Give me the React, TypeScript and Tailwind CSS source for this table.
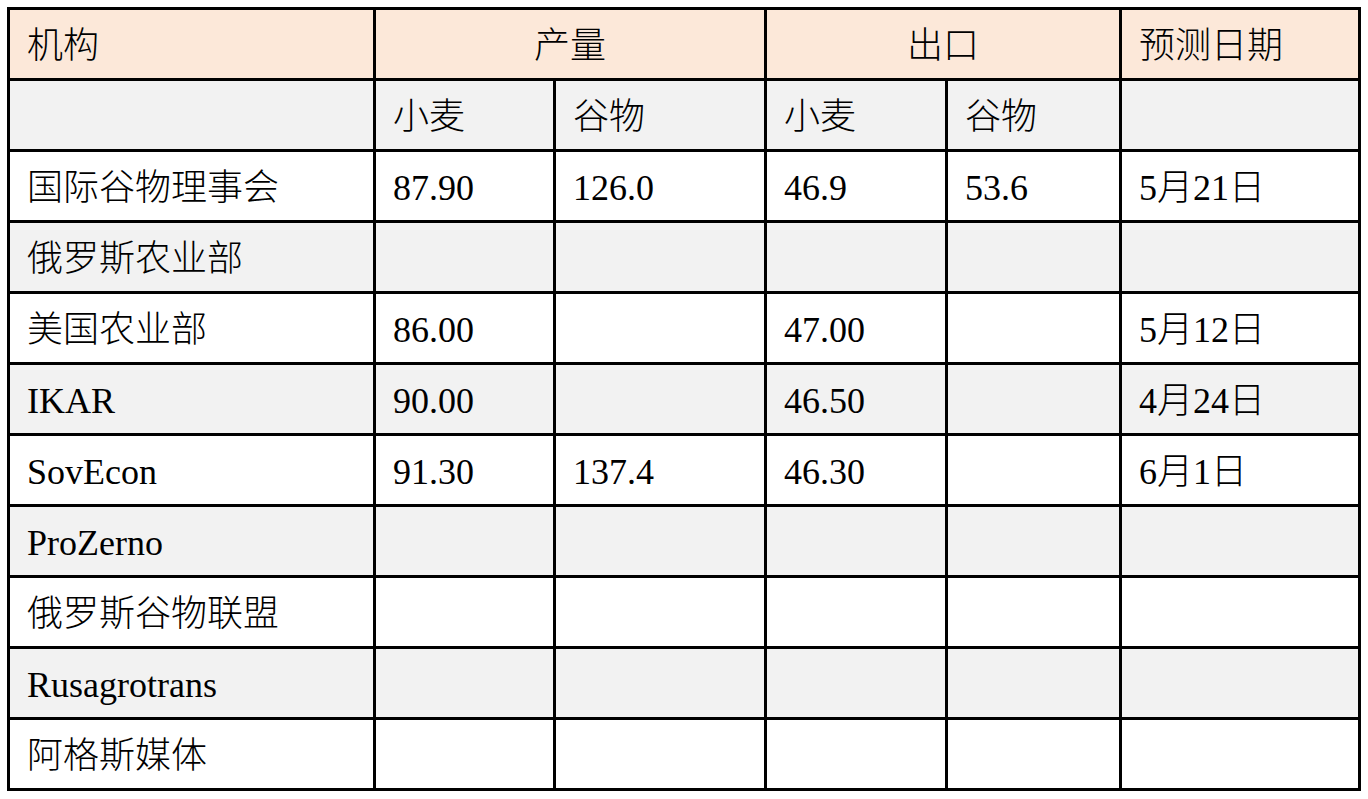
const rows: { name: string; cells: string[] }[] = [
  { name: '国际谷物理事会', cells: ['87.90', '126.0', '46.9', '53.6', '5月21日'] },
  { name: '俄罗斯农业部', cells: ['', '', '', '', ''] },
  { name: '美国农业部', cells: ['86.00', '', '47.00', '', '5月12日'] },
  { name: 'IKAR', cells: ['90.00', '', '46.50', '', '4月24日'] },
  { name: 'SovEcon', cells: ['91.30', '137.4', '46.30', '', '6月1日'] },
  { name: 'ProZerno', cells: ['', '', '', '', ''] },
  { name: '俄罗斯谷物联盟', cells: ['', '', '', '', ''] },
  { name: 'Rusagrotrans', cells: ['', '', '', '', ''] },
  { name: '阿格斯媒体', cells: ['', '', '', '', ''] },
];

const cell = 'border-[3px] border-black px-[17px] pt-[3px] align-middle font-light';

export default function App() {
  return (
    <div
      className="min-h-screen bg-white pl-[7px] pt-[7px] text-[36px] leading-none text-black"
      style={{ fontFamily: '"Liberation Serif", "Noto Sans CJK SC", serif' }}
    >
      <table className="w-[1353px] table-fixed border-collapse">
        <colgroup>
          <col className="w-[366px]" />
          <col className="w-[180px]" />
          <col className="w-[211px]" />
          <col className="w-[181px]" />
          <col className="w-[174px]" />
          <col className="w-[239px]" />
        </colgroup>
        <thead>
          <tr className="h-[71px] bg-[#fce8d9]">
            <th className={`${cell} text-left`}>机构</th>
            <th colSpan={2} className={`${cell} text-center`}>产量</th>
            <th colSpan={2} className={`${cell} text-center`}>出口</th>
            <th className={`${cell} text-left`}>预测日期</th>
          </tr>
          <tr className="h-[71px] bg-[#f2f2f2]">
            <th className={`${cell} text-left`}></th>
            <th className={`${cell} text-left`}>小麦</th>
            <th className={`${cell} text-left`}>谷物</th>
            <th className={`${cell} text-left`}>小麦</th>
            <th className={`${cell} text-left`}>谷物</th>
            <th className={`${cell} text-left`}></th>
          </tr>
        </thead>
        <tbody>
          {rows.map((r, i) => (
            <tr key={r.name} className={`h-[71px] ${i % 2 === 1 ? 'bg-[#f2f2f2]' : 'bg-white'}`}>
              <td className={cell}>{r.name}</td>
              {r.cells.map((c, j) => (
                <td key={j} className={cell}>
                  {c}
                </td>
              ))}
            </tr>
          ))}
        </tbody>
      </table>
    </div>
  );
}
